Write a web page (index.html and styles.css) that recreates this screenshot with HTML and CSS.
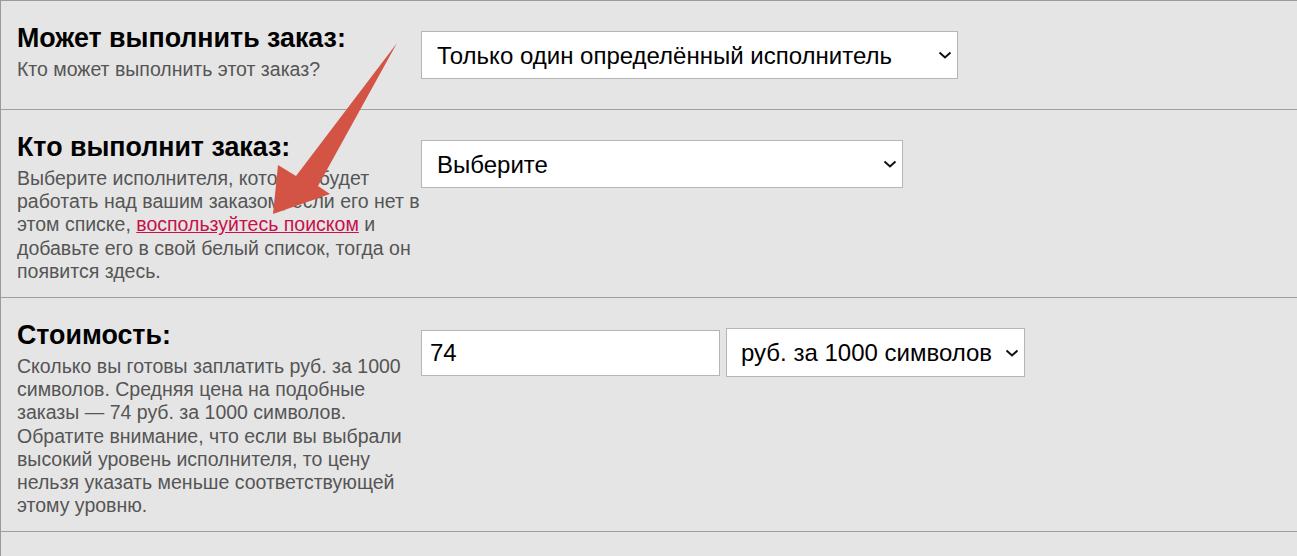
FILE: index.html
```html
<!DOCTYPE html>
<html lang="ru">
<head>
<meta charset="utf-8">
<title>Заказ</title>
<link rel="stylesheet" href="styles.css">
</head>
<body>
<div class="form">
  <div class="row">
    <div class="label">
      <div class="title">Может выполнить заказ:</div>
      <div class="desc">Кто может выполнить этот заказ?</div>
    </div>
    <div class="controls">
      <div class="sel sel-wide">
        <select><option>Только один определённый исполнитель</option></select>
        <svg class="chev" viewBox="0 0 14 8" width="14" height="8"><path d="M1.5 1.5 L7 6.5 L12.5 1.5" fill="none" stroke="#111" stroke-width="2"/></svg>
      </div>
    </div>
  </div>
  <div class="row">
    <div class="label">
      <div class="title">Кто выполнит заказ:</div>
      <div class="desc">Выберите исполнителя, который будет работать над вашим заказом, если его нет в этом списке, <a href="#">воспользуйтесь поиском</a> и добавьте его в свой белый список, тогда он появится здесь.</div>
    </div>
    <div class="controls">
      <div class="sel sel-mid">
        <select><option>Выберите</option></select>
        <svg class="chev" viewBox="0 0 14 8" width="14" height="8"><path d="M1.5 1.5 L7 6.5 L12.5 1.5" fill="none" stroke="#111" stroke-width="2"/></svg>
      </div>
    </div>
  </div>
  <div class="row">
    <div class="label">
      <div class="title">Стоимость:</div>
      <div class="desc">Сколько вы готовы заплатить руб. за 1000 символов. Средняя цена на подобные заказы — 74 руб. за 1000 символов. Обратите внимание, что если вы выбрали высокий уровень исполнителя, то цену нельзя указать меньше соответствующей этому уровню.</div>
    </div>
    <div class="controls">
      <input class="price" type="text" value="74">
      <div class="sel sel-unit">
        <select><option>руб. за 1000 символов</option></select>
        <svg class="chev" viewBox="0 0 14 8" width="14" height="8"><path d="M1.5 1.5 L7 6.5 L12.5 1.5" fill="none" stroke="#111" stroke-width="2"/></svg>
      </div>
    </div>
  </div>
  <div class="row-empty"></div>
  <svg class="arrow" width="1297" height="556" viewBox="0 0 1297 556">
    <polygon points="397,43 318,186 330,194 273,214 278,165 296,176" fill="#d35444"/>
  </svg>
</div>
</body>
</html>
```
FILE: styles.css
```css
html, body {
  margin: 0;
  padding: 0;
  background: #e5e5e5;
}
body {
  font-family: "Liberation Sans", Arial, sans-serif;
  color: #000;
  overflow: hidden;
  height: 556px;
}
.form {
  position: relative;
  border-left: 1px solid #9a9a9a;
  border-top: 1px solid #9a9a9a;
}
.row {
  display: flex;
  align-items: flex-start;
  border-bottom: 1px solid #a0a0a0;
  padding: 22px 16px 14px 16px;
}
.row-empty {
  height: 24px;
}
.label {
  width: 404px;
  flex: none;
}
.title {
  font-size: 26.8px;
  font-weight: bold;
  line-height: 30px;
  margin-bottom: 5px;
}
.desc {
  font-size: 19.5px;
  line-height: 23.2px;
  color: #555;
}
.desc a {
  color: #c8104a;
  text-decoration: underline;
}
.controls {
  margin-top: 8px;
  margin-bottom: 16px;
  display: flex;
  align-items: center;
  gap: 6px;
}
.sel {
  position: relative;
}
.sel select {
  appearance: none;
  -webkit-appearance: none;
  box-sizing: border-box;
  background: #fff;
  border: 1px solid #b5b5b5;
  border-radius: 0;
  font-family: "Liberation Sans", Arial, sans-serif;
  font-size: 24px;
  color: #000;
  height: 48px;
  padding: 0 40px 0 15px;
  margin: 0;
  display: block;
  outline: none;
}
.sel-wide select { width: 537px; }
.sel-mid select { width: 482px; }
.sel-unit select { width: 299px; height: 49px; padding: 0 20px 0 14px; }
.chev {
  position: absolute;
  right: 6px;
  top: 50%;
  margin-top: -4px;
  pointer-events: none;
}
.price {
  box-sizing: border-box;
  width: 299px;
  height: 46px;
  border: 1px solid #b5b5b5;
  border-radius: 0;
  background: #fff;
  font-family: "Liberation Sans", Arial, sans-serif;
  font-size: 24px;
  padding: 0 8px;
  margin: 0;
  outline: none;
  color: #000;
}
.arrow {
  position: absolute;
  left: -1px;
  top: -1px;
  pointer-events: none;
}
```
